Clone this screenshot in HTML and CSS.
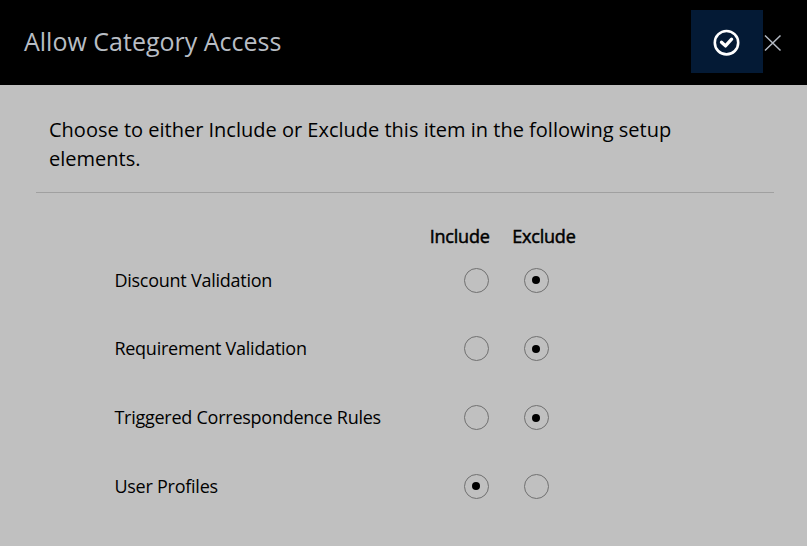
FILE: index.html
```
<!DOCTYPE html>
<html lang="en">
<head>
<meta charset="utf-8">
<title>Allow Category Access</title>
<link rel="stylesheet" href="styles.css">
</head>
<body>
<header class="header">
  <h1 class="title">Allow Category Access</h1>
  <button class="confirm" aria-label="Confirm">
    <svg width="28" height="28" viewBox="0 0 28 28" fill="none" stroke="#fff" stroke-width="2.6"><circle cx="13.5" cy="14.7" r="11.7"/><path d="M8.5 14.2l4 3.7 6.1-6.7" stroke-width="3.3" stroke-linecap="round" stroke-linejoin="round"/></svg>
  </button>
  <button class="close" aria-label="Close">
    <svg width="18" height="18" viewBox="0 0 18 18" fill="none" stroke="#b4bac4" stroke-width="1.5"><path d="M1 1.5l15.5 15M16.5 1.5l-15.5 15"/></svg>
  </button>
</header>
<main class="content">
  <p class="intro">Choose to either Include or Exclude this item in the following setup elements.</p>
  <div class="options">
    <div class="row head"><span></span><span>Include</span><span>Exclude</span></div>
    <div class="row"><span class="label">Discount Validation</span><span class="radio"></span><span class="radio on"></span></div>
    <div class="row"><span class="label">Requirement Validation</span><span class="radio"></span><span class="radio on"></span></div>
    <div class="row"><span class="label">Triggered Correspondence Rules</span><span class="radio"></span><span class="radio on"></span></div>
    <div class="row"><span class="label">User Profiles</span><span class="radio on"></span><span class="radio"></span></div>
  </div>
</main>
</body>
</html>
```
FILE: styles.css
```
* { box-sizing: border-box; }
body { margin: 0; height: 546px; overflow: hidden; background: #c0c0c0; color: #000; font-family: "Open Sans", sans-serif; }
.header { height: 85px; background: #000; display: flex; align-items: center; padding: 0 25px 0 24px; }
.title { margin: 0; padding-bottom: 4px; flex: 1; font-size: 25px; font-weight: 400; color: #b8bdc4; }
button { border: 0; background: none; padding: 0; display: flex; align-items: center; justify-content: center; }
.confirm { width: 72px; height: 63px; background: #041a35; margin-top: -2px; }
.close { width: 19px; height: 63px; }
.content { padding: 0 33px 0 36px; }
.intro { margin: 0; height: 108px; padding: 30px 60px 0 13px; font-size: 20px; line-height: 29px; border-bottom: 1px solid #a0a0a0; }
.options { padding: 28px 0 0 78px; }
.row { display: grid; grid-template-columns: 332px 60px 60px; height: 68.75px; align-items: center; }
.row.head { height: 24.7px; grid-template-columns: 315.7px 82.5px 70px; font-size: 18px; line-height: 25px; letter-spacing: -0.2px; padding-top: 3px; -webkit-text-stroke: 0.5px #000; }
.label { font-size: 18px; line-height: 25px; letter-spacing: -0.25px; padding-left: 0.4px; }
.radio { width: 25px; height: 25px; border: 1px solid #707070; border-radius: 50%; justify-self: center; display: grid; place-items: center; }
.radio.on::after { content: ""; width: 8px; height: 8px; border-radius: 50%; background: #000; }
```
